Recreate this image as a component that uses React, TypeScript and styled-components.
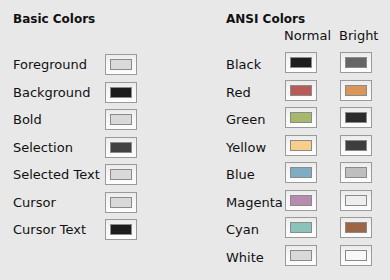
import React from 'react';
import styled, { createGlobalStyle } from 'styled-components';

const GlobalStyle = createGlobalStyle`
  html, body {
    margin: 0;
    padding: 0;
    background: #e8e8e8;
  }
  body {
    font-family: 'DejaVu Sans', 'Liberation Sans', sans-serif;
    color: #111;
  }
`;

const Page = styled.div`
  width: 390px;
  height: 280px;
  box-sizing: border-box;
  padding: 11px 0 0 13px;
  display: flex;
  background: #e8e8e8;
`;

const Column = styled.div<{ width?: number }>`
  display: flex;
  flex-direction: column;
  ${(p) => (p.width ? `width: ${p.width}px;` : 'flex: 1;')}
`;

const Title = styled.div`
  font-size: 12px;
  font-weight: bold;
  line-height: 16px;
  height: 16px;
`;

const Grid = styled.div<{ cols: string; top: number; head?: number }>`
  display: grid;
  grid-template-columns: ${(p) => p.cols};
  grid-template-rows: ${(p) => (p.head ? `${p.head}px` : '')};
  grid-auto-rows: 27.5px;
  column-gap: 23px;
  align-items: start;
  margin-top: ${(p) => p.top}px;
`;

const SubHeader = styled.div`
  font-size: 13px;
  line-height: 16px;
  white-space: nowrap;
  margin: 1px 0 0 -1px;
`;

const Label = styled.div<{ drop?: number }>`
  font-size: 13px;
  line-height: 21px;
  white-space: nowrap;
  padding-top: ${(p) => p.drop ?? 0}px;
`;

const Swatch = styled.div`
  width: 32px;
  height: 21px;
  box-sizing: border-box;
  border: 1px solid #9a9a9a;
  background: linear-gradient(#ebebeb, #f7f7f7 45%, #fdfdfd);
  padding: 4px;
`;

const Chip = styled.div<{ color: string }>`
  width: 22px;
  height: 11px;
  box-sizing: border-box;
  border: 1px solid #8a8a8a;
  background: ${(p) => p.color};
`;

const basic: [string, string][] = [
  ['Foreground', '#d9d9d9'],
  ['Background', '#1c1c1c'],
  ['Bold', '#d9d9d9'],
  ['Selection', '#414141'],
  ['Selected Text', '#d9d9d9'],
  ['Cursor', '#d9d9d9'],
  ['Cursor Text', '#1c1c1c'],
];

const ansi: [string, string, string][] = [
  ['Black', '#1c1c1c', '#666666'],
  ['Red', '#b95a57', '#da965a'],
  ['Green', '#a5b86c', '#2b2b2b'],
  ['Yellow', '#f7cf8b', '#3e3e3e'],
  ['Blue', '#7fabc4', '#bebebe'],
  ['Magenta', '#b98aaf', '#eeeeee'],
  ['Cyan', '#8ac3b9', '#9c6647'],
  ['White', '#d9d9d9', '#f8f8f8'],
];

const ColorWell: React.FC<{ color: string }> = ({ color }) => (
  <Swatch>
    <Chip color={color} />
  </Swatch>
);

export default function App() {
  return (
    <>
      <GlobalStyle />
      <Page>
        <Column width={213}>
          <Title>Basic Colors</Title>
          <Grid cols="69px 32px" top={27}>
            {basic.map(([name, color]) => (
              <React.Fragment key={name}>
                <Label>{name}</Label>
                <ColorWell color={color} />
              </React.Fragment>
            ))}
          </Grid>
        </Column>
        <Column>
          <Title>ANSI Colors</Title>
          <Grid cols="36px 32px 32px" top={0} head={25}>
            <span />
            <SubHeader>Normal</SubHeader>
            <SubHeader>Bright</SubHeader>
            {ansi.map(([name, normal, bright]) => (
              <React.Fragment key={name}>
                <Label drop={2}>{name}</Label>
                <ColorWell color={normal} />
                <ColorWell color={bright} />
              </React.Fragment>
            ))}
          </Grid>
        </Column>
      </Page>
    </>
  );
}
